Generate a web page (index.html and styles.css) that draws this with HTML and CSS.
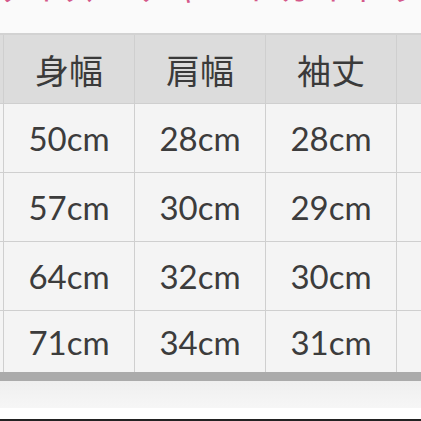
FILE: index.html
```html
<!DOCTYPE html>
<html lang="ja">
<head>
<meta charset="utf-8">
<link rel="stylesheet" href="styles.css">
</head>
<body>
<div class="page">
  <div class="title-strip"><div class="title">サイズ・チャートガイドライン</div></div>
  <table class="sizes">
    <thead>
      <tr><th></th><th>身幅</th><th>肩幅</th><th>袖丈</th><th></th></tr>
    </thead>
    <tbody>
      <tr><td></td><td>50cm</td><td>28cm</td><td>28cm</td><td></td></tr>
      <tr><td></td><td>57cm</td><td>30cm</td><td>29cm</td><td></td></tr>
      <tr><td></td><td>64cm</td><td>32cm</td><td>30cm</td><td></td></tr>
      <tr class="last"><td></td><td>71cm</td><td>34cm</td><td>31cm</td><td></td></tr>
    </tbody>
  </table>
  <div class="below"></div>
  <div class="edge"></div>
</div>
</body>
</html>
```

FILE: styles.css
```css
html, body {
  margin: 0;
  padding: 0;
  background: #fafafa;
  overflow: hidden;
}
.page {
  width: 421px;
  height: 421px;
  overflow: hidden;
  display: flex;
  flex-direction: column;
  font-family: Lato, "Noto Sans CJK JP", sans-serif;
}
.title-strip {
  height: 33px;
  overflow: hidden;
  flex: none;
}
.title {
  margin-top: -33px;
  margin-left: -6px;
  font-family: "Noto Sans CJK JP", sans-serif;
  font-size: 30px;
  line-height: 40px;
  color: #d4588a;
  white-space: nowrap;
  letter-spacing: 6px;
}
.sizes {
  border-collapse: collapse;
  margin-left: -128px;
  table-layout: fixed;
  width: 652px;
  flex: none;
}
.sizes th, .sizes td {
  width: 130px;
  border: 1px solid #cfcfcf;
  text-align: center;
  padding: 0;
  color: #444;
}
.sizes th {
  height: 68px;
  background: #dcdcdc;
  font-family: "Noto Sans CJK JP", sans-serif;
  font-weight: 400;
  font-size: 34px;
  color: #3a3a3a;
  border-top: 2px solid #d2d2d2;
}
.sizes td {
  height: 68px;
  background: #f4f4f4;
  font-size: 33px;
  color: #3c3c3c;
}
.sizes tr.last td {
  height: 61px;
  border-bottom: 9px solid #ababab;
}
.below {
  height: 27px;
  background: linear-gradient(#efefef, #f6f6f6);
  flex: none;
}
.edge {
  flex: 1;
  background: #fff;
  border-bottom: 2px solid #222;
}
```
